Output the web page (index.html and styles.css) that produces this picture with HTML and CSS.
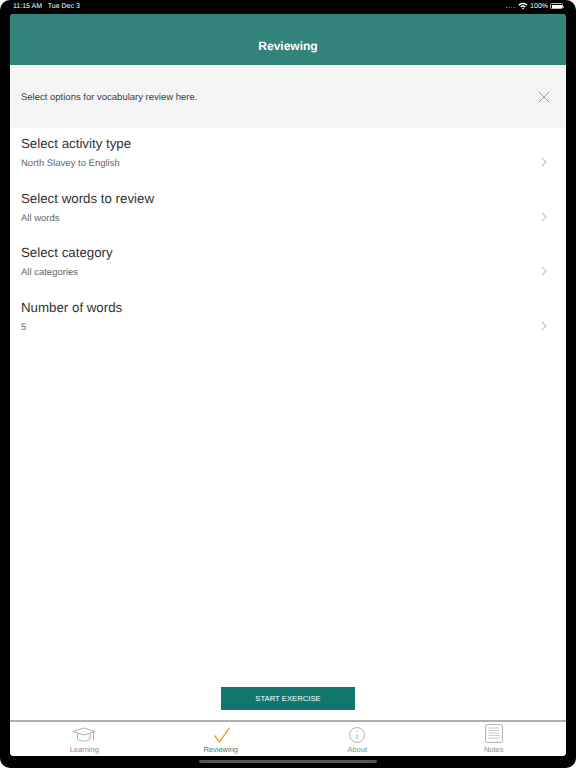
FILE: index.html
```html
<!DOCTYPE html>
<html>
<head>
  <title>Reviewing</title>
  <link rel="stylesheet" href="styles.css">
</head>
<body>
  <div class="device">
    <div class="status-bar">
      <span class="status-time">11:15 AM&nbsp;&nbsp; Tue Dec 3</span>
      <div class="status-right">
        <span class="status-dots"></span>
        <svg class="status-wifi" width="10" height="8" viewBox="0 0 10 8">
          <path d="M0.3 2.6 A6.8 6.8 0 0 1 9.7 2.6 L8.6 3.8 A5.2 5.2 0 0 0 1.4 3.8 Z" fill="#fff"/>
          <path d="M2.2 4.5 A4.1 4.1 0 0 1 7.8 4.5 L6.7 5.6 A2.6 2.6 0 0 0 3.3 5.6 Z" fill="#fff"/>
          <path d="M3.9 6.3 A1.6 1.6 0 0 1 6.1 6.3 L5 7.6 Z" fill="#fff"/>
        </svg>
        <span>100%</span>
        <span class="battery"><span class="battery-fill"></span></span>
      </div>
    </div>

    <div class="screen">
      <div class="header">Reviewing</div>

      <div class="banner">
        <span class="banner-text">Select options for vocabulary review here.</span>
        <svg width="12" height="12" viewBox="0 0 12 12">
          <path d="M0.5 0.5 L11.5 11.5 M11.5 0.5 L0.5 11.5" stroke="#8a8a8a" stroke-width="0.8" fill="none"/>
        </svg>
      </div>

      <div class="options">
        <div class="option">
          <div>
            <div class="option-title">Select activity type</div>
            <div class="option-value">North Slavey to English</div>
          </div>
          <svg class="chevron" width="6" height="10" viewBox="0 0 6 10"><path d="M1 1 L5 5 L1 9" stroke="#c4c4c6" stroke-width="1.2" fill="none"/></svg>
        </div>
        <div class="option">
          <div>
            <div class="option-title">Select words to review</div>
            <div class="option-value">All words</div>
          </div>
          <svg class="chevron" width="6" height="10" viewBox="0 0 6 10"><path d="M1 1 L5 5 L1 9" stroke="#c4c4c6" stroke-width="1.2" fill="none"/></svg>
        </div>
        <div class="option">
          <div>
            <div class="option-title">Select category</div>
            <div class="option-value">All categories</div>
          </div>
          <svg class="chevron" width="6" height="10" viewBox="0 0 6 10"><path d="M1 1 L5 5 L1 9" stroke="#c4c4c6" stroke-width="1.2" fill="none"/></svg>
        </div>
        <div class="option">
          <div>
            <div class="option-title">Number of words</div>
            <div class="option-value">5</div>
          </div>
          <svg class="chevron" width="6" height="10" viewBox="0 0 6 10"><path d="M1 1 L5 5 L1 9" stroke="#c4c4c6" stroke-width="1.2" fill="none"/></svg>
        </div>
      </div>

      <div class="actions">
        <button class="start-btn">START EXERCISE</button>
      </div>

      <div class="tabs">
        <div class="tab">
          <svg width="24" height="16" viewBox="0 0 24 16" fill="none" stroke="#9a9a9a" stroke-width="0.8">
            <path d="M1 4.5 L11.5 1 L23 4.5 L12 8 Z"/>
            <path d="M5.5 6.5 V12 C8 14.8 15.5 14.8 18 12 V6.5"/>
            <path d="M21.5 5 V13"/>
          </svg>
          <span>Learning</span>
        </div>
        <div class="tab tab-active">
          <svg class="check-icon" width="16" height="16" viewBox="0 0 16 16" fill="none" stroke="#f7941d" stroke-width="1.3">
            <path d="M0.5 8.5 L5.5 15 L15.5 0.5"/>
          </svg>
          <span>Reviewing</span>
        </div>
        <div class="tab">
          <svg width="16" height="16" viewBox="0 0 16 16" fill="none" stroke="#9a9a9a" stroke-width="0.8">
            <circle cx="8" cy="8" r="7.4"/>
            <path d="M8 7 V12"/>
            <path d="M8 4 V5.2"/>
          </svg>
          <span>About</span>
        </div>
        <div class="tab">
          <svg width="18" height="19" viewBox="0 0 18 19" fill="none" stroke="#9a9a9a" stroke-width="0.8">
            <rect x="0.6" y="0.6" width="16.8" height="17.8" rx="1.5"/>
            <path d="M3.5 4 H14.5 M3.5 6.5 H14.5 M3.5 9 H14.5 M3.5 11.5 H14.5 M3.5 14 H14.5" stroke="#bbb"/>
          </svg>
          <span>Notes</span>
        </div>
      </div>
    </div>

    <div class="home-indicator"></div>
  </div>
</body>
</html>
```

FILE: styles.css
```css
html, body {
  margin: 0;
  padding: 0;
  background: #fff;
}

body {
  width: 576px;
  height: 768px;
  overflow: hidden;
  font-family: "Liberation Sans", Arial, sans-serif;
  text-rendering: geometricPrecision;
}

.device {
  width: 576px;
  height: 768px;
  box-sizing: border-box;
  padding: 0 10px;
  background: #000;
  border-radius: 10px;
  display: flex;
  flex-direction: column;
}

.status-bar {
  height: 14px;
  flex: none;
  box-sizing: border-box;
  padding: 0 3px 2px;
  display: flex;
  justify-content: space-between;
  align-items: center;
  color: #fff;
  font-size: 7px;
}

.status-right {
  display: flex;
  align-items: center;
  gap: 2px;
}

.status-dots {
  width: 10px;
  height: 1px;
  margin-top: 3px;
  border-top: 1px dotted #666;
}

.battery {
  display: block;
  position: relative;
  width: 13px;
  height: 6px;
  padding: 0.5px;
  box-sizing: border-box;
  border: 0.5px solid #bbb;
  border-radius: 1.5px;
}

.battery:after {
  content: "";
  position: absolute;
  right: -2px;
  top: 1.5px;
  width: 1px;
  height: 2px;
  background: #999;
}

.battery-fill {
  display: block;
  height: 100%;
  background: #fff;
}

.screen {
  height: 742px;
  flex: none;
  display: flex;
  flex-direction: column;
  background: #fff;
  border-radius: 4px;
  overflow: hidden;
}

.header {
  height: 51px;
  flex: none;
  box-sizing: border-box;
  padding-top: 25px;
  text-align: center;
  background: #31837c;
  color: #fff;
  font-size: 12px;
  font-weight: bold;
  line-height: 15px;
}

.banner {
  height: 63px;
  flex: none;
  display: flex;
  justify-content: space-between;
  align-items: center;
  padding: 0 16px 0 11px;
  background: #f5f5f5;
  color: #3c3c3c;
  font-size: 9.5px;
}

.banner-text {
  margin-top: 2px;
}

.options {
  flex: 1;
}

.option {
  height: 54.5px;
  box-sizing: border-box;
  padding: 5px 19px 0 11px;
  display: flex;
  justify-content: space-between;
  align-items: flex-start;
}

.chevron {
  margin-top: 24px;
}

.option-title {
  color: #333;
  font-size: 13.3px;
  line-height: 22px;
}

.option-value {
  color: #666;
  font-size: 9.5px;
  line-height: 18px;
}

.actions {
  flex: none;
  display: flex;
  justify-content: center;
  padding-bottom: 10px;
}

.start-btn {
  width: 134px;
  height: 23px;
  padding: 0;
  border: none;
  background: #11766c;
  color: #fff;
  font-family: inherit;
  font-size: 7.7px;
}

.tabs {
  height: 36px;
  flex: none;
  box-sizing: border-box;
  padding: 0 4px 0 6px;
  display: grid;
  grid-template-columns: repeat(4, 1fr);
  border-top: 2px solid #b0b0b0;
  background: #fff;
}

.tab {
  display: flex;
  flex-direction: column;
  align-items: center;
  justify-content: flex-end;
  gap: 2px;
  padding-bottom: 2px;
  color: #8e8e8e;
  font-size: 7.5px;
  line-height: 9px;
}

.tab-active {
  color: #31837c;
}

.check-icon {
  margin-left: 2px;
}

.home-indicator {
  width: 178px;
  height: 3px;
  margin: 4px auto 0;
  flex: none;
  border-radius: 2px;
  background: #555;
}
```
